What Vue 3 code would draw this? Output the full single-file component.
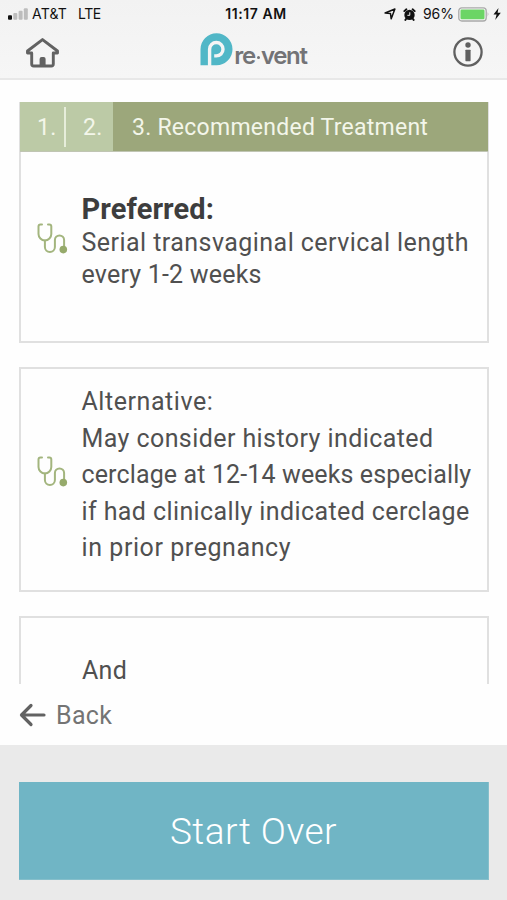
<script setup>
// Each line carries its own tracking in px.
const preferred = [
  { text: 'Serial transvaginal cervical length', track: 0.45 },
  { text: 'every 1-2 weeks', track: 0.2 },
]
const alternative = [
  { text: 'Alternative:', track: 0.55 },
  { text: 'May consider history indicated', track: 0.42 },
  { text: 'cerclage at 12-14 weeks especially', track: 0.13 },
  { text: 'if had clinically indicated cerclage', track: 0.4 },
  { text: 'in prior pregnancy', track: 0.57 },
]
</script>

<template>
  <div class="screen">
    <header class="top">
      <div class="status">
        <div class="carrier">
          <svg width="20" height="12" viewBox="0 0 20 12">
            <rect x="0" y="7.3" width="4" height="4.4" rx="1" fill="#111" />
            <rect x="5.3" y="5" width="4" height="6.7" rx="1" fill="#bdbdbd" />
            <rect x="10.6" y="2.7" width="4" height="9" rx="1" fill="#bdbdbd" />
            <rect x="15.8" y="0.3" width="4" height="11.4" rx="1" fill="#bdbdbd" />
          </svg>
          <span class="att">AT&amp;T</span>
          <span class="lte">LTE</span>
        </div>
        <div class="clock">11:17 AM</div>
        <div class="power">
          <svg class="loc" width="12" height="12" viewBox="0 0 12 12">
            <path d="M10.9 1 L7.2 10.8 L6.5 5.6 L1.1 5 Z" fill="none" stroke="#111" stroke-width="1.5" stroke-linejoin="round" />
          </svg>
          <svg class="alarm" width="13" height="13" viewBox="0 0 13 13">
            <circle cx="6.5" cy="6.9" r="5.2" fill="#111" />
            <path d="M1.3 3.1 L3.4 1.3 M11.7 3.1 L9.6 1.3 M3.2 10.8 L2.4 11.9 M9.8 10.8 L10.6 11.9" stroke="#111" stroke-width="1.9" stroke-linecap="round" />
            <path d="M6.8 4.3 V7.3 H4.4" fill="none" stroke="#f4f4f4" stroke-width="1" />
          </svg>
          <span class="pct">96%</span>
          <svg class="battery" width="32" height="15" viewBox="0 0 32 15">
            <rect x="0.8" y="0.8" width="27.4" height="13.2" rx="3" fill="#f5f5f5" stroke="#a9a9a9" stroke-width="1.3" />
            <rect x="2.5" y="2.5" width="24" height="9.8" rx="1.2" fill="#6bd565" />
            <path d="M29.7 5 Q31.4 7.4 29.7 9.8 Z" fill="#a9a9a9" />
          </svg>
          <svg class="bolt" width="8" height="12" viewBox="0 0 8 12">
            <path d="M5.5 0 L0.5 6.6 H3.6 L2.2 12 L7.8 4.8 H4.6 Z" fill="#111" />
          </svg>
        </div>
      </div>
      <nav class="nav">
        <svg class="home" width="36" height="32" viewBox="0 0 36 32">
          <path d="M17.5 2.6 L2.5 14 V16 H6.7 V27 Q6.7 29 8.7 29 H26.3 Q28.3 29 28.3 27 V16 H32.5 V14 Z" fill="none" stroke="#626262" stroke-width="2.9" stroke-linejoin="round" />
          <path d="M14.6 29 V22 Q14.6 20 16.6 20 H18.6 Q20.6 20 20.6 22 V29 Z" fill="#626262" />
        </svg>
        <div class="logo">
          <svg width="33" height="33" viewBox="0 0 33 33">
            <path d="M0.5 32.3 V16.2 A16 16 0 1 1 16.5 32.2 Z" fill="#51b7c7" />
            <path d="M9.6 33 V16.2 A6.7 6.7 0 1 1 16.3 22.9 H14.2" fill="none" stroke="#f5f5f5" stroke-width="3.4" />
            <circle cx="16.3" cy="16.2" r="4.1" fill="#51b7c7" />
          </svg>
          <span class="brand">re<i class="dot"></i>vent</span>
        </div>
        <svg class="info" width="32" height="32" viewBox="0 0 32 32">
          <circle cx="16" cy="16" r="13.6" fill="none" stroke="#606060" stroke-width="2.3" />
          <circle cx="16" cy="9" r="2.7" fill="#606060" />
          <rect x="13.4" y="13.7" width="5.2" height="11.5" rx="0.6" fill="#606060" />
        </svg>
      </nav>
    </header>

    <main class="content">
      <section class="card first">
        <div class="steps">
          <div class="done"><span class="s1">1.</span><span class="s2">2.</span></div>
          <div class="current">3. Recommended Treatment</div>
        </div>
        <div class="row">
          <svg class="steth" width="31" height="31" viewBox="0 0 31 31">
            <g fill="none" stroke="#a3b57e" stroke-width="2" stroke-linecap="round" stroke-linejoin="round">
              <path d="M5 1.5 H3.5 Q1.5 1.5 1.5 3.5 V11 A6.4 6.4 0 0 0 14.3 11 V3.5 Q14.3 1.5 12.3 1.5 H11" />
              <path d="M7.9 17.4 V24 A5 5 0 0 0 17.9 24 V17 A4.6 4.6 0 0 1 27.1 17 V24" />
            </g>
            <circle cx="26.3" cy="26.6" r="3.8" fill="#96aa6b" />
          </svg>
          <div class="copy">
            <strong>Preferred:</strong>
            <span v-for="l in preferred" :key="l.text" :style="{ letterSpacing: l.track + 'px' }">{{ l.text }}</span>
          </div>
        </div>
      </section>

      <section class="card second">
        <svg class="steth" width="31" height="31" viewBox="0 0 31 31">
          <g fill="none" stroke="#a3b57e" stroke-width="2" stroke-linecap="round" stroke-linejoin="round">
            <path d="M5 1.5 H3.5 Q1.5 1.5 1.5 3.5 V11 A6.4 6.4 0 0 0 14.3 11 V3.5 Q14.3 1.5 12.3 1.5 H11" />
            <path d="M7.9 17.4 V24 A5 5 0 0 0 17.9 24 V17 A4.6 4.6 0 0 1 27.1 17 V24" />
          </g>
          <circle cx="26.3" cy="26.6" r="3.8" fill="#96aa6b" />
        </svg>
        <div class="copy loose">
          <span v-for="l in alternative" :key="l.text" :style="{ letterSpacing: l.track + 'px' }">{{ l.text }}</span>
        </div>
      </section>

      <section class="card third">
        <div class="copy loose"><span>And</span></div>
      </section>
    </main>

    <div class="back">
      <svg width="28" height="24" viewBox="0 0 28 24">
        <path d="M12 2.5 L2.5 12 L12 21.5 M3 12 H25" fill="none" stroke="#626262" stroke-width="3.2" stroke-linecap="round" stroke-linejoin="round" />
      </svg>
      <span>Back</span>
    </div>

    <footer class="footer">
      <button class="start">Start Over</button>
    </footer>
  </div>
</template>

<style>
body {
  margin: 0;
  background: #fefefe;
}
</style>

<style scoped>
* {
  box-sizing: border-box;
}
.screen {
  width: 507px;
  height: 900px;
  display: flex;
  flex-direction: column;
  overflow: hidden;
  background: #fefefe;
  font-family: Roboto, "Liberation Sans", sans-serif;
  color: #505050;
}
svg {
  display: block;
  flex: none;
}
.top {
  height: 80px;
  flex: none;
  background: linear-gradient(#f2f2f2, #f6f6f6);
  border-bottom: 2px solid #e8e8e8;
}
.status {
  height: 28px;
  display: grid;
  grid-template-columns: 200px 1fr 200px;
  align-items: center;
  padding: 0 6px 0 8px;
  font-family: Inter, sans-serif;
  font-size: 14px;
  line-height: 28px;
  color: #111;
  white-space: nowrap;
}
.carrier,
.power {
  display: flex;
  align-items: center;
}
.att {
  margin-left: 4px;
  letter-spacing: 0.2px;
}
.lte {
  margin-left: 11px;
  letter-spacing: -0.5px;
}
.clock {
  text-align: center;
  font-weight: 600;
  letter-spacing: 0.55px;
  padding-left: 3px;
}
.power {
  justify-content: flex-end;
}
.alarm {
  margin-left: 7px;
}
.pct {
  margin-left: 7px;
}
.battery {
  margin-left: 4px;
}
.bolt {
  margin-left: 3px;
}
.nav {
  height: 50px;
  display: flex;
  justify-content: space-between;
  align-items: flex-start;
  padding: 0 23px 0 25px;
}
.home {
  margin-top: 9px;
}
.logo {
  display: flex;
  align-items: flex-start;
  margin: 5px 0 0 -6px;
}
.brand {
  display: flex;
  font-family: Inter, sans-serif;
  font-size: 24px;
  line-height: 30px;
  font-weight: 600;
  letter-spacing: -1.3px;
  color: #737376;
  margin: 8px 0 0 1px;
}
.dot {
  width: 3px;
  height: 3px;
  border-radius: 50%;
  background: #737376;
  align-self: center;
  margin: 3px 1px 0 2px;
}
.info {
  margin-top: 8px;
}
.content {
  height: 604px;
  flex: none;
  padding: 22px 18px 0 19px;
  overflow: hidden;
}
.card {
  border: 2px solid #e0e0e0;
  background: #fefefe;
}
.first {
  height: 241px;
  border-top: 0;
}
.steps {
  height: 50px;
  display: flex;
  margin: 0 -1px 0 -1px;
  border-bottom: 1px solid #c0c5b3;
  font-size: 23px;
  line-height: 51px;
  font-weight: 400;
  color: #f3f6ea;
  letter-spacing: 0.25px;
}
.done {
  width: 93px;
  display: flex;
  align-items: center;
  background: #bccaa6;
}
.s1 {
  width: 46px;
  height: 40px;
  line-height: 41px;
  padding-left: 17px;
  border-right: 2px solid #e6edda;
}
.s2 {
  height: 40px;
  line-height: 41px;
  padding-left: 17px;
}
.current {
  flex: 1;
  padding-left: 19px;
  background: #9ca77b;
  white-space: nowrap;
}
.row,
.second {
  display: flex;
  align-items: flex-start;
}
.steth {
  margin-left: 16px;
}
.row .steth {
  margin-top: 71px;
}
.copy {
  display: flex;
  flex-direction: column;
  font-size: 25px;
  line-height: 32px;
  font-weight: 400;
  letter-spacing: 0.3px;
  white-space: nowrap;
}
.row .copy {
  margin: 41px 0 0 13.5px;
}
.copy strong {
  font-size: 29px;
  line-height: 32px;
  font-weight: 700;
  letter-spacing: 0.1px;
  color: #3d3d3d;
  margin-bottom: 2px;
}
.loose {
  line-height: 36.6px;
}
.second {
  height: 225px;
  margin-top: 24px;
}
.second .steth {
  margin-top: 87px;
}
.second .copy {
  margin: 15px 0 0 13.5px;
}
.third {
  height: 120px;
  margin-top: 24px;
}
.third .copy {
  margin: 35px 0 0 61px;
}
.back {
  height: 61px;
  flex: none;
  display: flex;
  align-items: center;
  padding-left: 19px;
  font-size: 25px;
  font-weight: 400;
  letter-spacing: 0.3px;
  color: #747474;
}
.back span {
  margin: 2px 0 0 9px;
}
.footer {
  flex: 1;
  padding: 37px 18px 20px 19px;
  background: #eaeaea;
}
.start {
  display: block;
  width: 100%;
  height: 98px;
  padding: 2px 0 0;
  border: 1px solid #86bfcb;
  border-width: 0 1px 1px 0;
  background: #70b5c5;
  color: #fff;
  font-family: inherit;
  font-size: 37px;
  font-weight: 300;
  letter-spacing: 0.5px;
}
</style>
